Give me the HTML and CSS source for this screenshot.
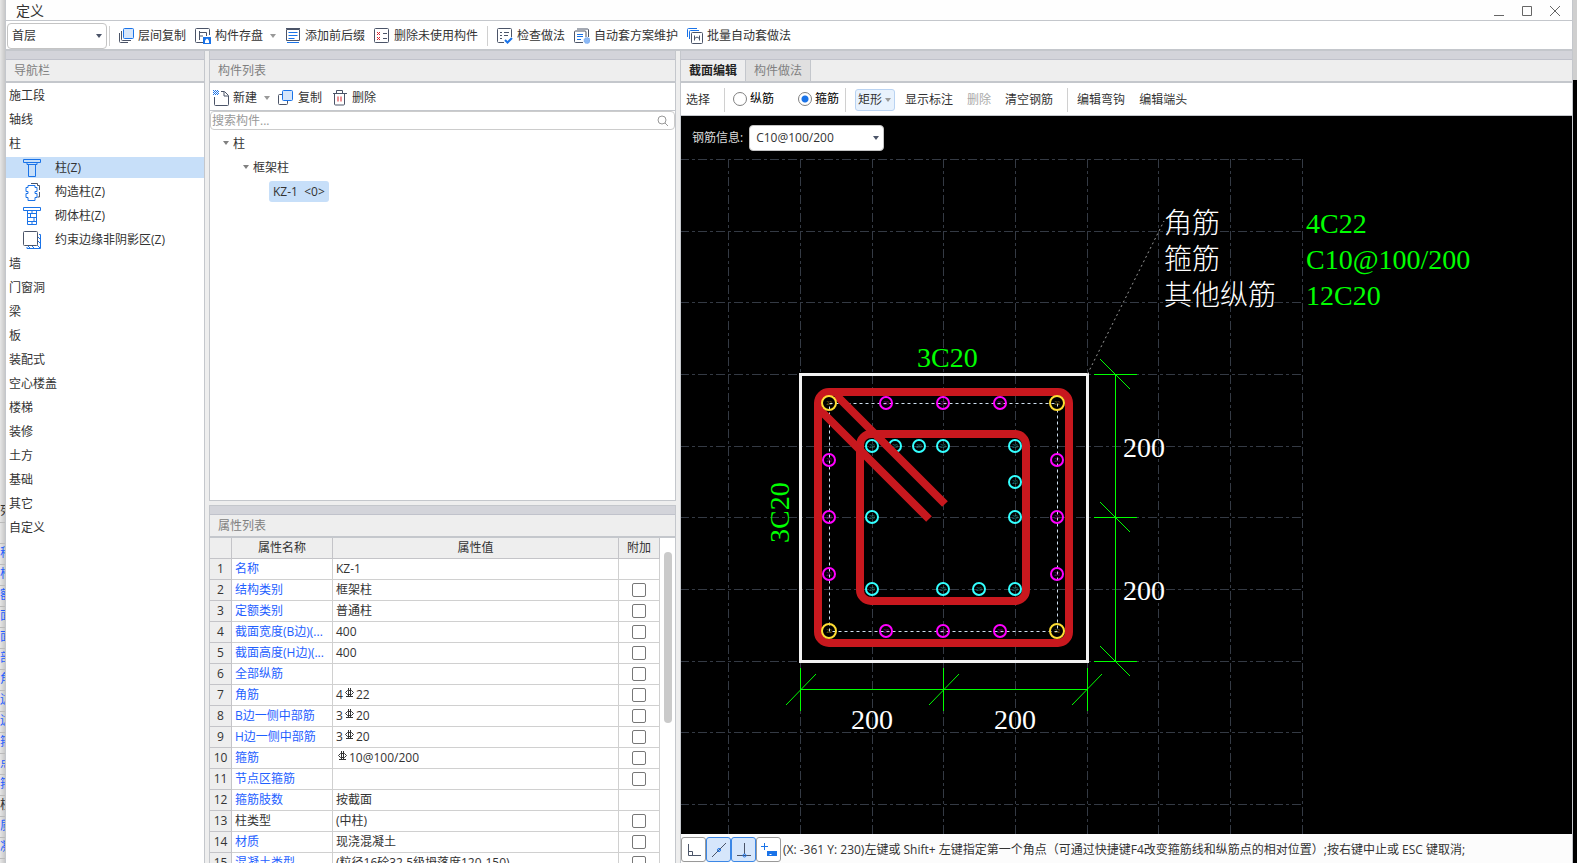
FILE: index.html
```
<!DOCTYPE html>
<html lang="zh-CN">
<head>
    <meta charset="UTF-8">
    <meta name="viewport" content="width=device-width, initial-scale=1.0">
    <title>定义</title>
    <link rel="stylesheet" href="styles.css">
</head>
<body>
    <div class="behind-left" aria-hidden="true">
        <span class="dark">列</span>
        <span></span>
        <span>称</span><span>构</span><span>额</span><span>面</span><span>面</span><span>部</span><span>角</span><span>边</span><span>边</span><span>箍</span><span>点</span><span>箍</span><span class="dark">柱</span><span>质</span><span>凝</span>
    </div>
    <div class="window">
        <header class="titlebar">
            <h1>定义</h1>
            <div class="window-buttons">
                <button type="button" aria-label="最小化"><svg width="12" height="12"><path d="M1 10.500h10"/></svg></button>
                <button type="button" aria-label="最大化"><svg width="12" height="12"><path d="M1.500 1.500h9v9h-9z"/></svg></button>
                <button type="button" aria-label="关闭"><svg width="12" height="12"><path d="M1 1l10 10M11 1L1 11"/></svg></button>
            </div>
        </header>

        <div class="toolbar">
            <div class="select floor">
                <select aria-label="楼层"><option>首层</option></select>
            </div>
            <i class="sep"></i>
            <button type="button">
                <svg class="icon" viewBox="0 0 16 16"><rect class="b fill" x="5.500" y=".5" width="10" height="10" rx="1"/><path d="M3.500 3v8.500a1 1 0 0 0 1 1H13M1.500 5v8.500a1 1 0 0 0 1 1H10"/></svg>
                层间复制
            </button>
            <button type="button">
                <svg class="icon" viewBox="0 0 16 16"><path d="M8 14.500H1.500a1 1 0 0 1-1-1v-12a1 1 0 0 1 1-1h12a1 1 0 0 1 1 1V7M4.500 3v9M4.500 4.500h7v3.500M4.500 8H8"/><path class="bf" d="M8 9h8v7H8z"/><path fill="#fff" stroke="none" d="M10 12.500l2-2 2 2V15h-4z"/></svg>
                构件存盘
                <i class="caret light"></i>
            </button>
            <button type="button">
                <svg class="icon" viewBox="0 0 16 16"><path class="b" d="M3.500 4.500h9M3.500 7.500h9M3.500 10.500h6M2 14.500h12"/><path d="M1.500 1.500h13v11h-13zM1 .5h14"/></svg>
                添加前后缀
            </button>
            <button type="button">
                <svg class="icon" viewBox="0 0 16 16"><rect x=".5" y=".5" width="14" height="14" rx="1"/><path d="M9 5.500h4M9 10.500h4"/><path class="r" d="M3 4l3 3M6 4L3 7M3 9l3 3M6 9l-3 3"/></svg>
                删除未使用构件
            </button>
            <i class="sep"></i>
            <button type="button">
                <svg class="icon" viewBox="0 0 16 16"><path d="M14.500 9V1.500a1 1 0 0 0-1-1h-12a1 1 0 0 0-1 1v12a1 1 0 0 0 1 1H7M3 4.500h2M7 4.500h5M3 7.500h2M7 7.500h4M3 10.500h2"/><path class="b wide" d="M8 12l2.500 2.500L15 10"/></svg>
                检查做法
            </button>
            <button type="button">
                <svg class="icon" viewBox="0 0 16 16"><path d="M9 14.500H1.500a1 1 0 0 1-1-1V4a1 1 0 0 1 1-1h9.500a1 1 0 0 1 1 1v5M3 1h10.500a1 1 0 0 1 1 1v7"/><path class="b" d="M3 6.500h6M3 8.500h6M3 11.500h4"/><circle cx="13" cy="12.500" r="3" fill="#8db9f5" stroke="#69a3f0" stroke-dasharray="1 1"/></svg>
                自动套方案维护
            </button>
            <button type="button">
                <svg class="icon" viewBox="0 0 16 16"><path class="b" d="M.5 9V1.500a1 1 0 0 1 1-1H10M2.500 11V3.500a1 1 0 0 1 1-1H12"/><rect x="4.500" y="4.500" width="11" height="11" rx="1"/><path d="M7.500 7.500v5M12.500 7.500v5M7.500 10.500l2.500-1.500 2.500 1.500"/></svg>
                批量自动套做法
            </button>
        </div>

        <main>
            <nav class="panel">
                <h2>导航栏</h2>
                <ul class="nav">
                    <li><a href="#">施工段</a></li>
                    <li><a href="#">轴线</a></li>
                    <li><a href="#">柱</a>
                        <ul>
                            <li><a href="#" class="active"><svg class="nav-icon" viewBox="0 0 18 18"><path d="M.5.5h17v3H14v2H4v-2H.500zM4 3.500h10M5.500 5.500h7v12h-7z"/></svg>柱(Z)</a></li>
                            <li><a href="#"><svg class="nav-icon" viewBox="0 0 18 18"><path class="g" d="M8 .5h6.500v2h2V7M16.500 9v5h-2"/><path d="M5 2.500h7v2h2v4h-2v2h2v4h-2v3H5v-3H3v-4h2v-2H3v-4h2z"/></svg>构造柱(Z)</a></li>
                            <li><a href="#"><svg class="nav-icon" viewBox="0 0 18 18"><path d="M.5.5h17v3H.500zM4.500 3.500v14h9v-14M4.500 6.500h9M4.500 10.500h9M4.500 14.500h9M9 3v3.500M7.500 7v3.500M11 11v3.500M9 15v2.500"/></svg>砌体柱(Z)</a></li>
                            <li><a href="#"><svg class="nav-icon" viewBox="0 0 18 18"><path d="M16 3.500h1.500v14H4V16M15 6l2 2M15 10l2 2M14 14l3 3M9 15l2 2M5 15l2 2"/><rect class="g" x=".5" y=".5" width="14" height="14" rx="1" fill="#fff"/></svg>约束边缘非阴影区(Z)</a></li>
                        </ul>
                    </li>
                    <li><a href="#">墙</a></li>
                    <li><a href="#">门窗洞</a></li>
                    <li><a href="#">梁</a></li>
                    <li><a href="#">板</a></li>
                    <li><a href="#">装配式</a></li>
                    <li><a href="#">空心楼盖</a></li>
                    <li><a href="#">楼梯</a></li>
                    <li><a href="#">装修</a></li>
                    <li><a href="#">土方</a></li>
                    <li><a href="#">基础</a></li>
                    <li><a href="#">其它</a></li>
                    <li><a href="#">自定义</a></li>
                </ul>
            </nav>

            <div class="middle">
                <section class="panel components">
                    <h2>构件列表</h2>
                    <div class="tools">
                        <button type="button">
                            <svg class="icon" viewBox="0 0 16 16"><path d="M8 1.500h3.500l4 4v9a1 1 0 0 1-1 1h-12a1 1 0 0 1-1-1V7M11 2v4h4"/><path class="b" stroke-dasharray="1 1" d="M0 .5h5M1 1.500h5M0 2.500h5M1 3.500h5M0 4.500h5"/></svg>
                            新建
                            <i class="caret light"></i>
                        </button>
                        <button type="button">
                            <svg class="icon" viewBox="0 0 16 16"><path d="M4 4.500H1.500a1 1 0 0 0-1 1v8a1 1 0 0 0 1 1h7a1 1 0 0 0 1-1V11"/><rect class="b fill" x="4.500" y=".5" width="10" height="10" rx="1"/></svg>
                            复制
                        </button>
                        <button type="button">
                            <svg class="icon" viewBox="0 0 16 16"><path d="M1 3.500h14M4.500 3V.500h6V3M2.500 4v10a1 1 0 0 0 1 1h8a1 1 0 0 0 1-1V4"/><path class="r" d="M6 6.500v5M9 6.500v5"/></svg>
                            删除
                        </button>
                    </div>
                    <div class="search">
                        <input type="text" placeholder="搜索构件..." aria-label="搜索构件">
                        <svg width="12" height="12"><circle cx="5" cy="5" r="4"/><path d="M8 8l3 3"/></svg>
                    </div>
                    <ul class="tree">
                        <li><i class="caret"></i>柱
                            <ul>
                                <li><i class="caret"></i>框架柱
                                    <ul>
                                        <li><a href="#">KZ-1&nbsp; &lt;0&gt;</a></li>
                                    </ul>
                                </li>
                            </ul>
                        </li>
                    </ul>
                </section>

                <section class="panel props">
                    <h2>属性列表</h2>
                    <div class="props-body">
                        <table>
                            <colgroup><col class="c-num"><col class="c-name"><col><col class="c-add"></colgroup>
                            <thead>
                                <tr><th></th><th>属性名称</th><th>属性值</th><th>附加</th></tr>
                            </thead>
                            <tbody>
                                <tr><th>1</th><td>名称</td><td>KZ-1</td><td></td></tr>
                                <tr><th>2</th><td>结构类别</td><td>框架柱</td><td><input type="checkbox" aria-label="结构类别"></td></tr>
                                <tr><th>3</th><td>定额类别</td><td>普通柱</td><td><input type="checkbox" aria-label="定额类别"></td></tr>
                                <tr><th>4</th><td>截面宽度(B边)(...</td><td>400</td><td><input type="checkbox" aria-label="截面宽度"></td></tr>
                                <tr><th>5</th><td>截面高度(H边)(...</td><td>400</td><td><input type="checkbox" aria-label="截面高度"></td></tr>
                                <tr><th>6</th><td>全部纵筋</td><td></td><td><input type="checkbox" aria-label="全部纵筋"></td></tr>
                                <tr><th>7</th><td>角筋</td><td>4<svg class="steel" viewBox="0 0 11 11"><use href="#steel"/></svg>22</td><td><input type="checkbox" aria-label="角筋"></td></tr>
                                <tr><th>8</th><td>B边一侧中部筋</td><td>3<svg class="steel" viewBox="0 0 11 11"><use href="#steel"/></svg>20</td><td><input type="checkbox" aria-label="B边一侧中部筋"></td></tr>
                                <tr><th>9</th><td>H边一侧中部筋</td><td>3<svg class="steel" viewBox="0 0 11 11"><use href="#steel"/></svg>20</td><td><input type="checkbox" aria-label="H边一侧中部筋"></td></tr>
                                <tr><th>10</th><td>箍筋</td><td><svg class="steel" viewBox="0 0 11 11"><use href="#steel"/></svg>10@100/200</td><td><input type="checkbox" aria-label="箍筋"></td></tr>
                                <tr><th>11</th><td>节点区箍筋</td><td></td><td><input type="checkbox" aria-label="节点区箍筋"></td></tr>
                                <tr><th>12</th><td>箍筋肢数</td><td>按截面</td><td></td></tr>
                                <tr class="plain"><th>13</th><td>柱类型</td><td>(中柱)</td><td><input type="checkbox" aria-label="柱类型"></td></tr>
                                <tr><th>14</th><td>材质</td><td>现浇混凝土</td><td><input type="checkbox" aria-label="材质"></td></tr>
                                <tr><th>15</th><td>混凝土类型</td><td>(粒径16砼32.5级坍落度120-150)</td><td><input type="checkbox" aria-label="混凝土类型"></td></tr>
                            </tbody>
                        </table>
                        <div class="scrollbar"><i></i></div>
                    </div>
                </section>
            </div>

            <section class="panel editor">
                <div class="tabs">
                    <button type="button" class="on">截面编辑</button>
                    <button type="button">构件做法</button>
                </div>
                <div class="edit-tools">
                    <button type="button">选择</button>
                    <i class="sep"></i>
                    <label><input type="radio" name="bar"> 纵筋</label>
                    <label><input type="radio" name="bar" checked> 箍筋</label>
                    <i class="sep"></i>
                    <button type="button" class="shape">矩形<i class="caret light"></i></button>
                    <button type="button">显示标注</button>
                    <button type="button" disabled>删除</button>
                    <button type="button">清空钢筋</button>
                    <i class="sep"></i>
                    <button type="button">编辑弯钩</button>
                    <button type="button">编辑端头</button>
                </div>
                <div class="canvas">
                    <svg class="drawing" viewBox="680 116 892 718" preserveAspectRatio="xMinYMin meet">
                        <defs>
                            <g id="steel"><path d="M3.500 2.500h4l2 2-2 2h-4l-2-2zM4.500 0v9M6.500 0v9M2 8.500h7"/></g>
                            <g id="bar20"><circle r="6"/><text y="2">20</text></g>
                            <g id="bar22"><circle r="7"/><text y="2">22</text></g>
                        </defs>
                        <!-- grid -->
                        <path class="grid" d="M680 159.500H1303M680 231.500H1303M680 302.500H1303M680 374.500H1303M680 446.500H1303M680 517.500H1303M680 589.500H1303M680 661.500H1303M680 732.500H1303M680 804.500H1303"/>
                        <path class="grid" d="M728.500 159V834M800.500 159V834M872.500 159V834M943.500 159V834M1015.500 159V834M1087.500 159V834M1158.500 159V834M1230.500 159V834M1302.500 159V834"/>
                        <!-- column outline -->
                        <rect class="outline" x="800.500" y="374.500" width="287" height="287"/>
                        <path class="leader" d="M1087.500 374L1164 221"/>
                        <!-- bars and stirrups -->
                        <rect class="stirrup" x="818" y="392" width="251" height="251" rx="11"/>
                        <rect class="stirrup" x="860" y="434" width="166" height="167" rx="11"/>
                        <rect class="axis" x="829.500" y="403.500" width="228" height="228"/>
                        <g class="bar cyan">
                            <use href="#bar20" x="872" y="446"/><use href="#bar20" x="895" y="446"/><use href="#bar20" x="919" y="446"/><use href="#bar20" x="943" y="446"/><use href="#bar20" x="1015" y="446"/>
                            <use href="#bar20" x="1015" y="482"/><use href="#bar20" x="1015" y="517"/><use href="#bar20" x="872" y="517"/>
                            <use href="#bar20" x="872" y="589"/><use href="#bar20" x="943" y="589"/><use href="#bar20" x="979" y="589"/><use href="#bar20" x="1015" y="589"/>
                        </g>
                        <path class="stirrup" d="M820 410L929 519M836 395L945 504"/>
                        <g class="bar magenta">
                            <use href="#bar20" x="886" y="403"/><use href="#bar20" x="943" y="403"/><use href="#bar20" x="1000" y="403"/>
                            <use href="#bar20" x="829" y="460"/><use href="#bar20" x="829" y="517"/><use href="#bar20" x="829" y="574"/>
                            <use href="#bar20" x="1057" y="460"/><use href="#bar20" x="1057" y="517"/><use href="#bar20" x="1057" y="574"/>
                            <use href="#bar20" x="886" y="631"/><use href="#bar20" x="943" y="631"/><use href="#bar20" x="1000" y="631"/>
                        </g>
                        <g class="bar yellow">
                            <use href="#bar22" x="829" y="403"/><use href="#bar22" x="1057" y="403"/><use href="#bar22" x="829" y="631"/><use href="#bar22" x="1057" y="631"/>
                        </g>
                        <!-- dimensions -->
                        <path class="dim" d="M1115.500 374V662M1094 374.500h43M1094 517.500h43M1094 661.500h43M800 689.500H1088M800.500 668v43M943.500 668v43M1087.500 668v43"/>
                        <path class="dim" d="M1100 359l30 30M1100 502l30 30M1100 646l30 30M786 705l30-31M929 705l30-31M1072 705l30-31"/>
                        <g class="cad white">
                            <text x="1123" y="457">200</text>
                            <text x="1123" y="600">200</text>
                            <text x="851" y="729">200</text>
                            <text x="994" y="729">200</text>
                            <text x="1164" y="233">角筋</text>
                            <text x="1164" y="269">箍筋</text>
                            <text x="1164" y="305">其他纵筋</text>
                        </g>
                        <g class="cad green">
                            <text x="917" y="367">3C20</text>
                            <text x="-543" y="789" transform="rotate(-90)">3C20</text>
                            <text x="1306" y="233">4C22</text>
                            <text x="1306" y="269">C10@100/200</text>
                            <text x="1306" y="305">12C20</text>
                        </g>
                    </svg>
                    <div class="rebar-info">
                        <label for="rebar">钢筋信息:</label>
                        <div class="select">
                            <select id="rebar"><option>C10@100/200</option></select>
                        </div>
                    </div>
                </div>
                <footer>
                    <div class="snap">
                        <button type="button" aria-label="正交"><svg width="16" height="16"><path d="M2.500 2v11.500H15M2.500 9.500h4v4"/></svg></button>
                        <button type="button" class="on" aria-label="中点"><svg width="16" height="16"><path d="M1 15L15 1"/><circle class="p" cx="8" cy="8" r="1.500"/></svg></button>
                        <button type="button" class="on" aria-label="垂点"><svg width="16" height="16"><path d="M1 13.500h14M8.500 1v11"/><circle class="p" cx="8.500" cy="13.500" r="1.500"/></svg></button>
                        <button type="button" aria-label="动态输入"><svg width="16" height="16"><path class="p" d="M0 4.500h7M3.500 1v7"/><path class="s" d="M6 9h10v5H6z"/><path d="M8.500 12.500h2" stroke="#fff"/></svg></button>
                    </div>
                    <span>(X: -361 Y: 230)左键或 Shift+ 左键指定第一个角点（可通过快捷键F4改变箍筋线和纵筋点的相对位置）;按右键中止或 ESC 键取消;</span>
                </footer>
            </section>
        </main>
    </div>
    <div class="behind-right" aria-hidden="true"></div>
</body>
</html>
```
FILE: styles.css
```
*, *::before, *::after {
    box-sizing: border-box;
}
body {
    display: flex;
    height: 100vh;
    margin: 0;
    overflow: hidden;
    background: #eee;
    color: #333;
    font-family: "Open Sans", "Noto Sans CJK SC", sans-serif;
    font-size: 12px;
    line-height: 18px;
}
ul {
    list-style: none;
    margin: 0;
    padding: 0;
}
a {
    color: inherit;
    text-decoration: none;
}
button {
    display: flex;
    align-items: center;
    padding: 0;
    border: none;
    background: none;
    color: inherit;
    font: inherit;
    white-space: nowrap;
}
svg {
    fill: none;
    stroke: #4b5468;
}
h1, h2 {
    margin: 0;
    font-weight: normal;
}

/* parts of the main window that show at the edges */
.behind-left {
    display: flex;
    flex-direction: column;
    width: 5px;
    padding-top: 502px;
    overflow: hidden;
    background: linear-gradient(90deg, #e6e6e6, #c8c8c8);
    color: #1f5fff;
}
.behind-left span {
    flex: none;
    height: 21px;
    border-bottom: 1px solid #bbb;
}
.behind-left .dark {
    color: #333;
}
.behind-right {
    width: 4px;
    background: linear-gradient(#cfcfcf 80px, #000 80px);
}

.window {
    flex: 1;
    min-width: 0;
    display: flex;
    flex-direction: column;
    border: 1px solid #c4c7cc;
    border-width: 0 1px;
    background: #eee;
}
.titlebar {
    display: flex;
    justify-content: space-between;
    align-items: center;
    height: 21px;
    padding: 1px 11px 0 10px;
    border-bottom: 1px solid #c4c7cc;
    background: #fefefe;
}
.titlebar h1 {
    font-size: 14px;
}
.window-buttons {
    display: flex;
    gap: 16px;
}
.window-buttons svg {
    stroke: #666;
}
.toolbar {
    display: flex;
    align-items: center;
    gap: 9px;
    height: 30px;
    padding: 2px 0 0 1px;
    border-bottom: 2px solid #c4c7cc;
    background: #fff;
}
.toolbar button, .tools button {
    gap: 4px;
}
.icon {
    width: 16px;
    height: 16px;
}
.b {
    stroke: #1a73e8;
}
.r {
    stroke: #d9202a;
}
.fill {
    fill: #d6e6fb;
}
.bf {
    fill: #1a73e8;
    stroke: none;
}
.wide {
    stroke-width: 2;
}
.sep {
    width: 1px;
    height: 20px;
    background: #d0d0d0;
}
.caret {
    display: inline-block;
    width: 0;
    height: 0;
    border: 3px solid transparent;
    border-top: 4px solid #4b5468;
    border-bottom: none;
}
.light {
    border-top-color: #999;
    margin-left: 3px;
}
.select {
    position: relative;
}
.select::after {
    content: "";
    position: absolute;
    right: 5px;
    top: 50%;
    margin-top: -2px;
    border: 3px solid transparent;
    border-top: 4px solid #4b5468;
    border-bottom: none;
    pointer-events: none;
}
select {
    appearance: none;
    width: 100%;
    height: 26px;
    padding: 0 4px;
    border: 1px solid #c4c4c4;
    border-radius: 4px;
    background: #fff;
    color: #333;
    font: inherit;
}
.floor {
    width: 100px;
}
.floor + .sep {
    margin: 0 -1px 0 -7px;
}

main {
    flex: 1;
    min-height: 0;
    display: grid;
    grid-template-columns: 199px 467px 1fr;
    gap: 4px;
}
.panel {
    min-width: 0;
    min-height: 0;
    display: flex;
    flex-direction: column;
    overflow: hidden;
    border: 1px solid #c4c7cc;
    border-width: 0 1px;
    background: #fff;
}
nav.panel {
    border-left: none;
}
.panel::before {
    content: "";
    flex: none;
    height: 9px;
    border-bottom: 1px solid #c0c2cb;
    background: #d3d4da;
}
.panel h2 {
    flex: none;
    height: 23px;
    padding-left: 8px;
    border-bottom: 2px solid #c4c7cc;
    background: #eee;
    color: #808080;
    font-size: 12px;
    line-height: 21px;
}

.nav {
    padding-top: 1px;
}
.nav li {
    display: flow-root;
}
.nav a {
    display: flex;
    align-items: center;
    height: 21px;
    margin: 1px 0 2px;
    padding-left: 3px;
}
.nav ul a {
    padding-left: 17px;
}
.nav .active {
    background: #c7dff9;
}
.nav-icon {
    width: 18px;
    height: 18px;
    margin-right: 14px;
    stroke: #1a73e8;
}
.nav-icon .g {
    stroke: #4b5468;
}

.middle {
    min-height: 0;
    display: flex;
    flex-direction: column;
    gap: 4px;
}
.components {
    flex: 450 1 0;
    border-bottom-width: 1px;
}
.tools {
    flex: none;
    display: flex;
    align-items: center;
    gap: 10px;
    height: 28px;
    padding: 2px 3px 0;
    border-bottom: 1px solid #c4c7cc;
}
.tools .light {
    margin: 0 -2px 0 3px;
}
.search {
    flex: none;
    display: flex;
    align-items: center;
    height: 19px;
    padding-right: 5px;
    border: 1px solid #ccc;
    border-radius: 4px;
}
.search input {
    flex: 1;
    padding: 0 1px;
    border: none;
    outline: none;
    background: none;
    font: inherit;
}
.search input::placeholder {
    color: #999;
}
.search svg {
    stroke: #999;
}
.tree {
    padding-top: 2px;
}
.tree li {
    line-height: 24px;
}
.tree > li {
    padding-left: 13px;
}
.tree .caret {
    margin: 0 4px 3px 0;
    border-top-color: #808080;
}
.tree ul {
    padding-left: 20px;
}
.tree ul ul {
    padding-left: 26px;
}
.tree a {
    display: inline-block;
    height: 21px;
    padding: 0 4px;
    border-radius: 3px;
    background: #c7dff9;
    line-height: 21px;
}

.props {
    flex: 358 1 0;
    border-top-width: 1px;
}
.props-body {
    flex: 1;
    min-height: 0;
    display: flex;
    overflow: hidden;
}
table {
    flex: 1;
    align-self: flex-start;
    table-layout: fixed;
    border-spacing: 0;
}
.c-num {
    width: 22px;
}
.c-name {
    width: 101px;
}
.c-add {
    width: 41px;
}
th, td {
    height: 21px;
    padding: 0 3px;
    border: 1px solid #d0d0d0;
    border-width: 0 1px 1px 0;
    font-weight: normal;
    line-height: 18px;
    text-align: left;
    white-space: nowrap;
    overflow: hidden;
}
th {
    padding: 0;
    border-color: #c4c4c8;
    background: #eee;
    text-align: center;
}
tbody td:nth-child(2) {
    color: #1f5fff;
}
tbody .plain td:nth-child(2) {
    color: #333;
}
td:last-child {
    padding: 0;
    text-align: center;
}
input[type="checkbox"] {
    appearance: none;
    display: block;
    width: 14px;
    height: 14px;
    margin: 0 auto;
    border: 1px solid #777;
    border-radius: 2px;
    background: #fff;
}
.steel {
    width: 11px;
    height: 11px;
    margin: 0 1px;
    stroke: #333;
    vertical-align: 0;
}
.scrollbar {
    width: 15px;
    padding: 14px 3px 0 4px;
}
.scrollbar i {
    display: block;
    height: 171px;
    border-radius: 4px;
    background: #cacaca;
}

.editor {
    border-right: none;
}
.tabs {
    flex: none;
    display: flex;
    height: 23px;
    border-bottom: 2px solid #c4c7cc;
    background: #eee;
}
.tabs button {
    padding: 0 8px;
    border-right: 1px solid #c4c7cc;
    background: #e0e0e0;
    color: #808080;
}
.tabs .on {
    background: #eee;
    color: #222;
    font-weight: bold;
}
.edit-tools {
    flex: none;
    display: flex;
    align-items: center;
    gap: 14px;
    height: 33px;
    padding: 1px 0 0 5px;
    border-bottom: 1px solid #c4c7cc;
}
.edit-tools .sep {
    height: 24px;
    margin-right: -5px;
}
.edit-tools label {
    display: flex;
    align-items: center;
    gap: 3px;
    margin: -2px 10px 0 0;
    color: #000;
}
.edit-tools .sep + label {
    margin-left: -1px;
}
.edit-tools label + .sep {
    margin-left: -18px;
}
.edit-tools button:disabled {
    color: #aaa;
}
.edit-tools .shape {
    height: 22px;
    margin-right: -4px;
    padding: 0 3px 0 2px;
    border: 1px solid #b9d3f2;
    border-radius: 3px;
    background: #e8f2fd;
}
input[type="radio"] {
    appearance: none;
    width: 14px;
    height: 14px;
    margin: 0;
    border: 1px solid #808080;
    border-radius: 50%;
    background: #fff;
}
input[type="radio"]:checked {
    background: radial-gradient(#1a73e8 3px, #fff 4px);
}
.canvas {
    position: relative;
    flex: 1;
    min-height: 0;
    margin-left: -1px;
    background: #000;
}
.drawing {
    display: block;
    width: 100%;
    height: 100%;
}
.rebar-info {
    position: absolute;
    top: 9px;
    left: 12px;
    display: flex;
    align-items: center;
    gap: 6px;
    color: #ddd;
}
.rebar-info .select {
    width: 135px;
}
.rebar-info select {
    padding-left: 6px;
}

.grid {
    stroke: #343a44;
    stroke-dasharray: 9 3 3 3;
}
.outline {
    stroke: #f2f2f2;
    stroke-width: 3;
}
.leader {
    stroke: #999;
    stroke-dasharray: 2 3;
}
.stirrup {
    stroke: #c8181e;
    stroke-width: 8;
}
.axis {
    stroke: #cfe0f0;
    stroke-dasharray: 3 3;
}
.bar {
    stroke: currentColor;
    stroke-width: 2;
}
#bar20 text, #bar22 text {
    fill: currentColor;
    stroke: none;
    font-size: 5px;
    text-anchor: middle;
    opacity: 0.5;
}
.cyan {
    color: #3ff;
}
.magenta {
    color: #f0f;
}
.yellow {
    color: #fd3;
}
.dim {
    stroke: #0f0;
}
.cad {
    stroke: none;
    font-family: "Liberation Serif", "Noto Sans CJK SC", serif;
    font-size: 28px;
    font-weight: 300;
}
.white {
    fill: #fff;
}
.green {
    fill: #0f0;
}

footer {
    flex: none;
    display: flex;
    align-items: center;
    gap: 2px;
    height: 29px;
    padding: 2px 0 0;
    background: #fcfcfc;
    white-space: nowrap;
}
.snap {
    display: flex;
}
.snap button {
    justify-content: center;
    width: 25px;
    height: 25px;
    border: 1px solid #999;
    border-radius: 3px;
    background: #fff;
}
.snap .on {
    border-color: #3b87e6;
    background: #d6e6fb;
}
.snap .p {
    stroke: #1a73e8;
}
.snap .s {
    fill: #1a73e8;
    stroke: none;
}
```
